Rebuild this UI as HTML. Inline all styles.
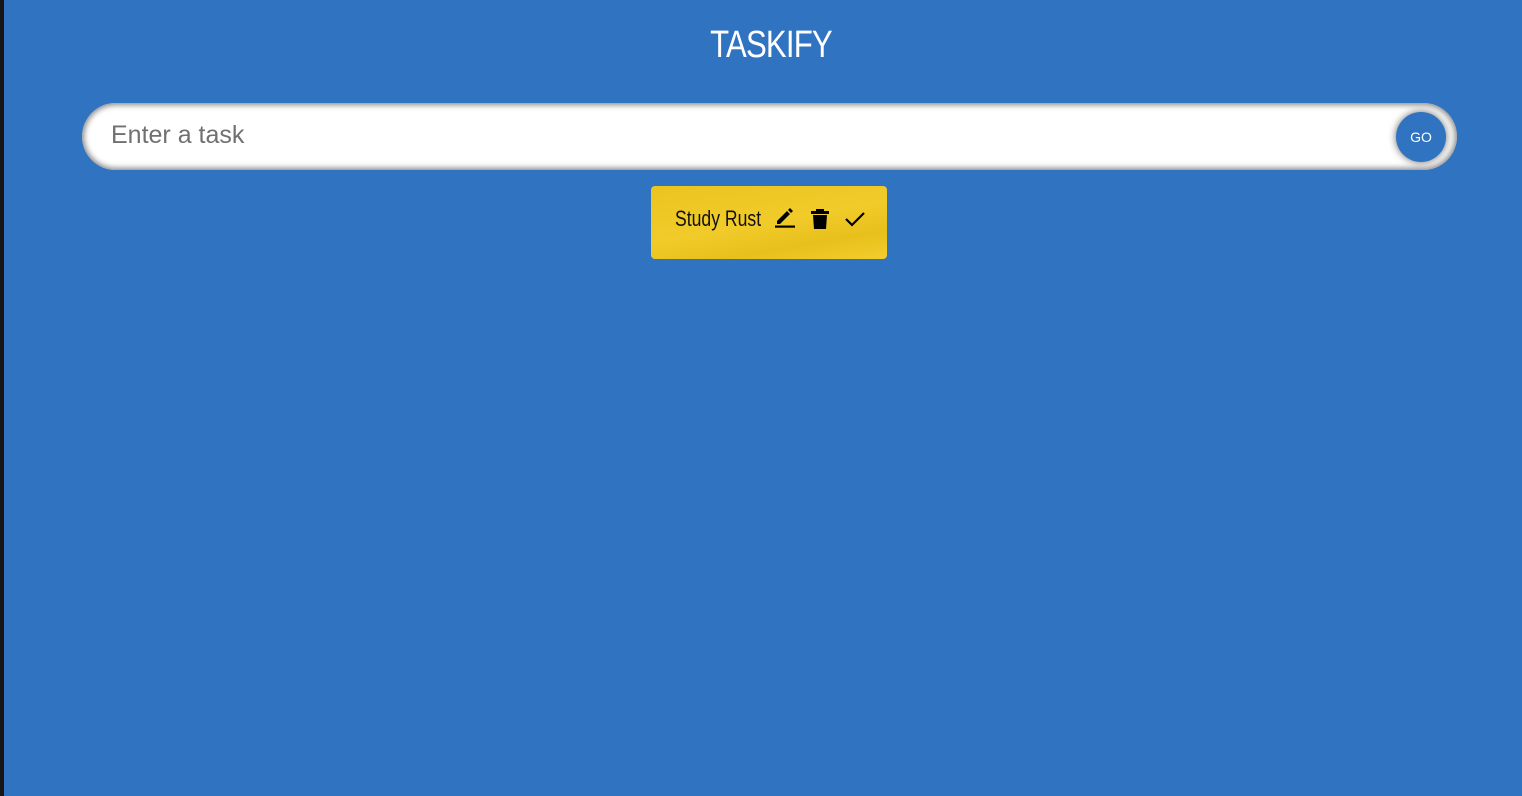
<!DOCTYPE html>
<html><head><style>
*{margin:0;padding:0;box-sizing:border-box}
body{width:1522px;height:796px;background:#2f73c1;position:relative;overflow:hidden;font-family:"Liberation Sans",sans-serif}
.strip{position:absolute;left:0;top:0;width:4px;height:796px;background:#151515}
h1{position:absolute;left:20px;right:0;top:24px;text-align:center;color:#fff;font-family:"Liberation Sans Narrow","Liberation Sans",sans-serif;font-weight:400;font-size:38px;letter-spacing:-1px;transform:scaleX(.82)}
.inp{position:absolute;left:82px;top:103px;width:1375px;height:67px;border-radius:34px;background:#fff;box-shadow:inset 0 0 6px 2px #888;}
.inp span{position:absolute;left:29px;top:18px;font-size:25px;color:#707070}
.go{position:absolute;left:1396px;top:112px;width:50px;height:50px;border-radius:50%;background:#2f73c1;color:#fff;font-size:14px;text-align:center;line-height:50px;box-shadow:0 0 8px #666}
.card{position:absolute;left:651px;top:186px;width:236px;height:73px;border-radius:4px;background:linear-gradient(170deg,#ebc41f 0%,#f1cb2a 50%,#e8c01c 75%,#f2cd2c 100%)}
.card .t{position:absolute;left:24px;top:20px;font-family:"Liberation Sans Narrow","Liberation Sans",sans-serif;font-size:22px;color:#111;transform:scaleX(.8);transform-origin:left}
.card svg{position:absolute}
</style></head><body>
<div class="strip"></div>
<h1>TASKIFY</h1>
<div class="inp"><span>Enter a task</span></div>
<div class="go">GO</div>
<div class="card">
<div class="t">Study Rust</div>
<svg style="left:123px;top:21px" width="22" height="22" viewBox="0 0 22 22"><path d="M3 14 L3 17 L6 17 L16 7 L13 4 Z M14 3 L16 1 L19 4 L17 6 Z" fill="#000"/><rect x="1" y="18.5" width="20" height="2.2" fill="#000"/></svg>
<svg style="left:159px;top:22px" width="20" height="22" viewBox="0 0 20 22"><path d="M6 1h8v2h5v3H1V3h5z M3 7h14l-1 14H4z" fill="#000"/></svg>
<svg style="left:193px;top:23px" width="22" height="20" viewBox="0 0 22 20"><path d="M2 10 L8 16 L20 4" stroke="#000" stroke-width="2.2" fill="none"/></svg>
</div>
</body></html>
